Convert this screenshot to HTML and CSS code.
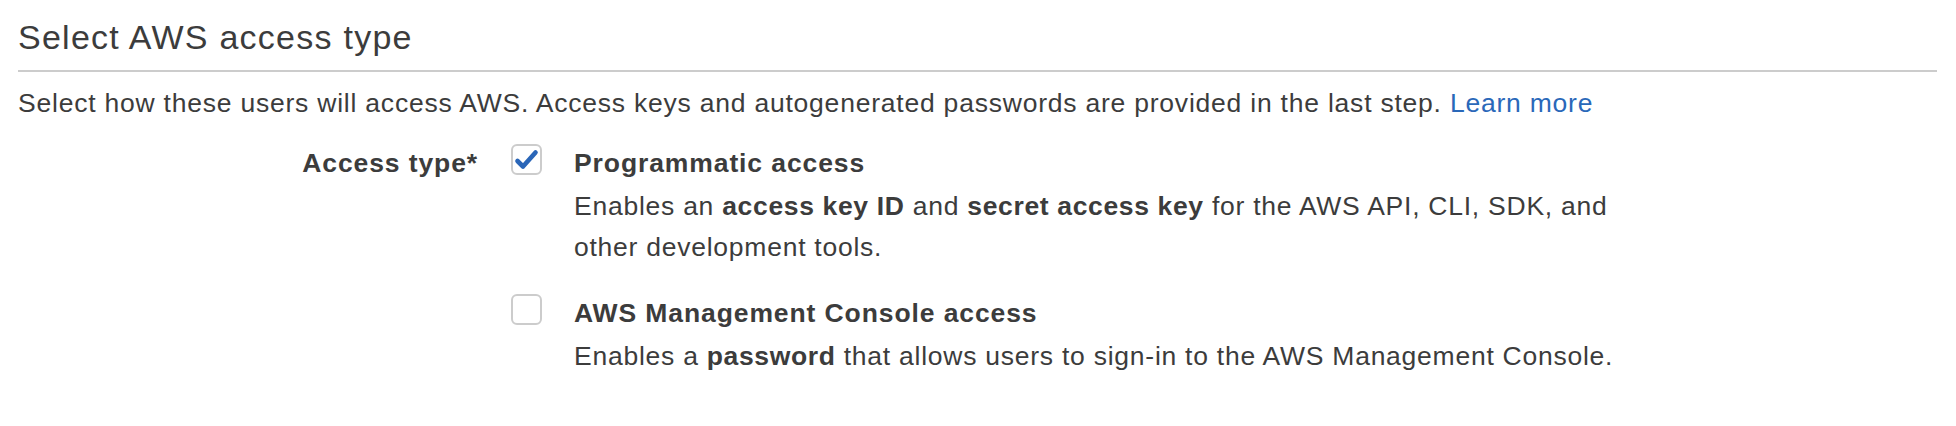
FILE: index.html
```html
<!DOCTYPE html>
<html lang="en">
<head>
<meta charset="utf-8">
<title>Select AWS access type</title>
<link rel="stylesheet" href="styles.css">
</head>
<body>
<div class="page">
  <h2 class="title">Select AWS access type</h2>
  <p class="intro">Select how these users will access AWS. Access keys and autogenerated passwords are provided in the last step. <a class="link" href="#">Learn more</a></p>
  <div class="field">
    <div class="field-label">Access type*</div>
    <div class="options">
      <div class="option">
        <span class="box checked">
          <svg class="check" viewBox="0 0 31 31" width="31" height="31" aria-hidden="true"><path d="M6.5 17 L12 22.5 L24.5 8.5" fill="none" stroke="#2a66b8" stroke-width="4.6" stroke-linecap="round" stroke-linejoin="round"/></svg>
        </span>
        <div class="option-text">
          <div class="option-title">Programmatic access</div>
          <div class="option-desc">Enables an <b>access key ID</b> and <b>secret access key</b> for the AWS API, CLI, SDK, and other development tools.</div>
        </div>
      </div>
      <div class="option">
        <span class="box"></span>
        <div class="option-text">
          <div class="option-title">AWS Management Console access</div>
          <div class="option-desc">Enables a <b>password</b> that allows users to sign-in to the AWS Management Console.</div>
        </div>
      </div>
    </div>
  </div>
</div>
</body>
</html>
```

FILE: styles.css
```css
html, body {
  margin: 0;
  padding: 0;
  background: #ffffff;
}

body {
  font-family: "Liberation Sans", Arial, Helvetica, sans-serif;
  color: #3c3c3c;
}

.page {
  margin: 0 19px 0 18px;
}

.title {
  margin: 0;
  padding: 17px 0 13px;
  font-size: 34px;
  line-height: 40px;
  font-weight: normal;
  letter-spacing: 1.25px;
  border-bottom: 2px solid #cccccc;
}

.intro {
  margin: 11px 0 0;
  font-size: 26.5px;
  line-height: 40px;
  letter-spacing: 0.78px;
}

.link {
  color: #2a68b9;
  text-decoration: none;
}

.field {
  display: flex;
  margin-top: 20px;
  font-size: 26.5px;
  letter-spacing: 0.75px;
}

.field-label {
  width: 460px;
  flex: none;
  text-align: right;
  font-weight: bold;
  line-height: 40px;
  letter-spacing: 0.9px;
}

.options {
  display: flex;
  flex-direction: column;
  gap: 25px;
  margin-left: 33px;
}

.option {
  display: flex;
  align-items: flex-start;
}

.box {
  flex: none;
  box-sizing: border-box;
  width: 31px;
  height: 31px;
  margin-top: 1px;
  border: 2px solid #cccccc;
  border-radius: 6px;
  background: #ffffff;
  position: relative;
}

.check {
  position: absolute;
  left: -2px;
  top: -2px;
}

.option-text {
  margin-left: 32px;
  max-width: 1075px;
}

.option-title {
  font-weight: bold;
  line-height: 40px;
  margin-bottom: 3px;
  letter-spacing: 0.9px;
}

.option-desc {
  line-height: 41px;
}

.option-desc b {
  font-weight: bold;
  letter-spacing: 0.65px;
}
```
